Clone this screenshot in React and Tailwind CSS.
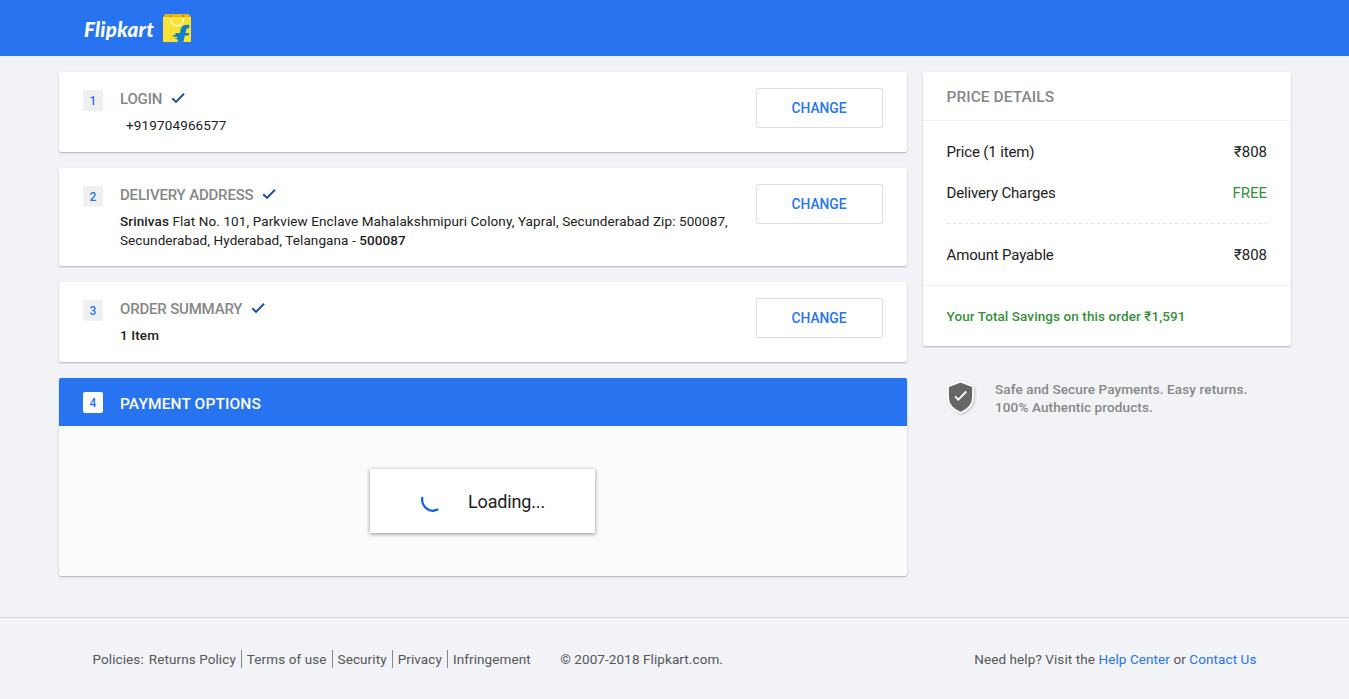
const CARD = 'rounded-[2px] bg-white shadow-[0_1px_2px_0_rgba(0,0,0,0.26)]';

function Check() {
  return (
    <svg width="14" height="12" viewBox="0 0 14 12" fill="none" className="mb-[3px] ml-[9px] shrink-0">
      <path d="M1.300 6.300 5 9.900 13 1.700" stroke="#1b4fa8" strokeWidth="2" />
    </svg>
  );
}

function Logo() {
  return (
    <svg width="30" height="30" viewBox="0 0 30 30" className="ml-2">
      <path d="M3 1h24l2 4H1z" fill="#f0b310" />
      <path d="M1 4.500h28V29H1z" fill="#f9e233" />
      <path d="M1 4.500h28v1H1z" fill="#fff04a" />
      <circle cx="8.500" cy="3" r="1" fill="#b98500" />
      <circle cx="21" cy="3" r="1" fill="#b98500" />
      <path d="M8.500 6c1 9 12 9 13 0" fill="none" stroke="#fffbe0" strokeWidth="1.500" />
      <path
        d="M27.500 12.200c-4.500-1.200-8 .5-9 4.600L17.800 20h-3.600l-1.700.9 1.700 1H12l-2 1.300 5.500.8-1 1.300H12l3.300 1.200c.8.300.9 1 .4 2.500h5.700l1.500-6.500h3.600l.7-2.500h-3.700l.7-2.800c.4-1.700 1.300-2.200 3-1.900z"
        fill="#1480c4"
      />
    </svg>
  );
}

function Shield() {
  return (
    <svg width="30" height="36" viewBox="0 0 30 36" className="drop-shadow-[1px_1px_1px_rgba(0,0,0,0.2)]">
      <path
        d="M14.500 1.700 27 6.500v10.500c0 7.300-5.500 13-12.500 15.900C7.500 30 2 24.300 2 17V6.500z"
        fill="#666"
        stroke="#fff"
        strokeWidth="1.800"
        strokeLinejoin="round"
      />
      <path d="m9 16.300 3.300 3.300 8-8.100" fill="none" stroke="#fff" strokeWidth="1.800" />
    </svg>
  );
}

function Step({ number, title, height, children }) {
  return (
    <section className={`${CARD} ${height} flex items-start pt-4 pr-6 pl-6`}>
      <span className="mt-[2px] flex h-[21px] w-5 items-center justify-center rounded-[2px] bg-[#f0f0f0] text-[12px] font-medium text-[#2874f0]">
        {number}
      </span>
      <div className="ml-[17px] flex-1">
        <h2 className="flex h-[22px] items-center text-[15px] font-medium tracking-[-0.18px] whitespace-nowrap text-[#878787]">
          {title}
          <Check />
        </h2>
        {children}
      </div>
      <button className="h-10 w-[127px] rounded-[2px] border border-[#e0e0e0] bg-white pr-px text-[13.800px] font-medium text-[#2874f0]">
        CHANGE
      </button>
    </section>
  );
}

function Row({ label, value, green }) {
  return (
    <div className="flex h-5 items-center justify-between text-[15px]">
      <span className="tracking-[-0.15px]">{label}</span>
      <span className={green ? 'text-[#388e3c]' : ''}>{value}</span>
    </div>
  );
}

const POLICIES = ['Returns Policy', 'Terms of use', 'Security', 'Privacy', 'Infringement'];

export default function App() {
  return (
    <div className="flex h-[699px] w-full flex-col overflow-hidden bg-[#f1f3f6] font-[Roboto,sans-serif] text-[#212121]">
      <header className="flex h-14 shrink-0 items-center bg-[#2874f0] pl-[84px]">
        <span className="mt-[2px] w-[70px] font-[Lato,sans-serif] text-[20.500px] font-black tracking-[0.3px] text-white italic">Flipkart</span>
        <Logo />
      </header>

      <main className="mt-4 ml-[59px] flex h-[545px] shrink-0 items-start gap-4">
        <div className="flex w-[848px] shrink-0 flex-col gap-4">
          <Step number="1" title="LOGIN" height="h-20">
            <p className="mt-[5px] ml-[6px] text-[13.500px] leading-5 tracking-[0.14px]">+919704966577</p>
          </Step>
          <Step number="2" title="DELIVERY ADDRESS" height="h-[98px]">
            <p className="mt-[6px] w-[620px] text-[13.500px] leading-[19px] tracking-[0.1px] whitespace-nowrap">
              <b className="font-medium">Srinivas</b> Flat No. 101, Parkview Enclave Mahalakshmipuri Colony, Yapral, Secunderabad Zip: 500087,
              <br />
              Secunderabad, Hyderabad, Telangana - <b className="font-medium">500087</b>
            </p>
          </Step>
          <Step number="3" title="ORDER SUMMARY" height="h-20">
            <p className="mt-[5px] text-[13.500px] leading-5 font-medium tracking-[0.12px]">1 Item</p>
          </Step>
          <section className="h-[198px] rounded-[2px] bg-[#fbfbfb] shadow-[0_1px_2px_0_rgba(0,0,0,0.26)]">
            <div className="flex h-12 items-center rounded-t-[2px] bg-[#2874f0] pl-6">
              <span className="flex h-[21px] w-5 items-center justify-center rounded-[2px] bg-white pt-px text-[12px] font-medium text-[#2874f0]">4</span>
              <h2 className="mt-[5px] ml-[17px] text-[15.500px] font-medium tracking-[0.12px] text-white">PAYMENT OPTIONS</h2>
            </div>
            <div className="mt-[43px] ml-[311px] flex h-16 w-[225px] items-center bg-white shadow-[0_1px_4px_0_rgba(0,0,0,0.45)]">
              <svg width="20" height="20" viewBox="0 0 20 20" fill="none" className="mt-[5px] ml-[50px]">
                <path d="M2.200 3.800C1.400 12.500 9 19.600 17.500 15.600" stroke="#0b5ee8" strokeWidth="2.200" strokeLinecap="round" />
              </svg>
              <span className="ml-7 text-[18px] tracking-[-0.15px]">Loading...</span>
            </div>
          </section>
        </div>

        <aside className="w-[368px] shrink-0">
          <section className={`${CARD} h-[274px]`}>
            <h2 className="flex h-[49px] items-center border-b border-[#f0f0f0] pt-[3px] pl-[23.500px] text-[15.500px] font-medium tracking-[0.05px] text-[#878787]">PRICE DETAILS</h2>
            <div className="h-[165px] border-b border-[#f0f0f0] pt-[21px] pr-6 pl-[23.500px]">
              <Row label="Price (1 item)" value="₹808" />
              <div className="h-[21px]" />
              <Row label="Delivery Charges" value="FREE" green />
              <div className="mt-5 mb-[21px] h-px bg-[repeating-linear-gradient(90deg,#e0e0e0_0_3px,transparent_3px_6px)]" />
              <Row label="Amount Payable" value="₹808" />
            </div>
            <p className="pt-[20px] pl-[23.500px] text-[13.500px] leading-5 font-medium tracking-[0.09px] text-[#388e3c]">Your Total Savings on this order ₹1,591</p>
          </section>
          <div className="mt-[34px] flex items-start pl-[23px]">
            <Shield />
            <p className="ml-[19px] text-[13.500px] leading-[18px] font-medium tracking-[0.12px] whitespace-nowrap text-[#878787]">
              Safe and Secure Payments. Easy returns.
              <br />
              100% Authentic products.
            </p>
          </div>
        </aside>
      </main>

      <footer className="flex h-[82px] shrink-0 items-center justify-between border-t border-[#dcdcde] pr-[92.500px] pl-[92.500px] text-[13.500px] leading-[18px] tracking-[0.09px] whitespace-nowrap text-[#565656]">
        <div className="flex items-center">
          <span className="mr-[5px]">Policies:</span>
          <ul className="flex">
            {POLICIES.map((item) => (
              <li key={item} className="mr-[5px] border-r border-[#878787] pr-[5px] last:mr-0 last:border-r-0 last:pr-0">
                {item}
              </li>
            ))}
          </ul>
          <span className="ml-[29.500px]">© 2007-2018 Flipkart.com.</span>
        </div>
        <p>
          Need help? Visit the <a className="text-[#2874f0]">Help Center</a> or <a className="text-[#2874f0]">Contact Us</a>
        </p>
      </footer>
    </div>
  );
}
